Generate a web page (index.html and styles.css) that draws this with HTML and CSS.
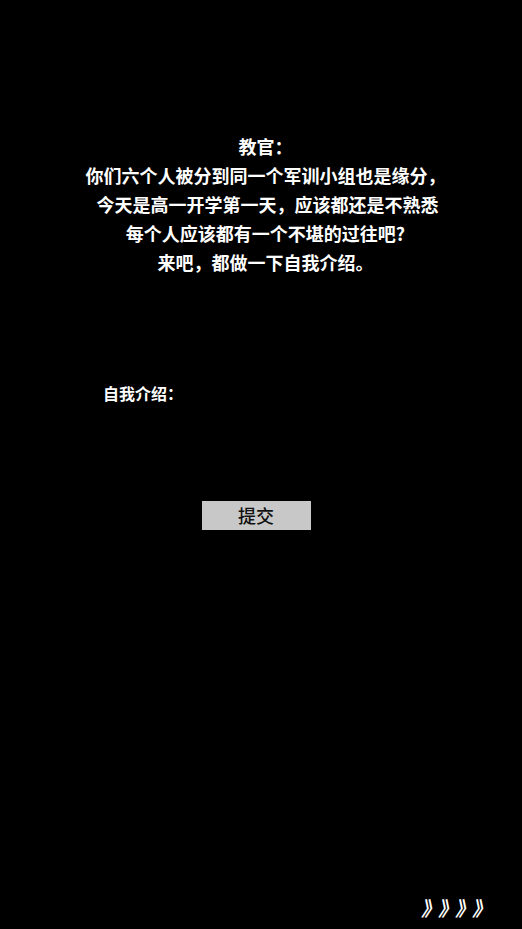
FILE: index.html
```html
<!DOCTYPE html>
<html lang="zh-CN">
<head>
  <meta charset="UTF-8">
  <meta name="viewport" content="width=device-width, initial-scale=1.0">
  <title>自我介绍</title>
  <link rel="stylesheet" href="styles.css">
</head>
<body>
  <div class="stage">
    <div class="dialog">
      <div class="line">教官：</div>
      <div class="line">你们六个人被分到同一个军训小组也是缘分，</div>
      <div class="line">&nbsp;今天是高一开学第一天，应该都还是不熟悉</div>
      <div class="line">每个人应该都有一个不堪的过往吧?</div>
      <div class="line">来吧，都做一下自我介绍。</div>
    </div>

    <div class="intro">
      <label class="intro-label" for="intro-text">自我介绍：</label>
      <input class="intro-input" id="intro-text" type="text">
    </div>

    <div class="actions">
      <button class="submit" type="button">提交</button>
    </div>
  </div>

  <div class="next">》》》》</div>
</body>
</html>
```

FILE: styles.css
```css
* {
  margin: 0;
  padding: 0;
  box-sizing: border-box;
}

html, body {
  height: 100%;
  overflow: hidden;
  background: #000000;
  color: #ffffff;
  font-family: "Noto Sans CJK SC", "Noto Sans", sans-serif;
}

body {
  display: flex;
  flex-direction: column;
  justify-content: space-between;
}

.stage {
  padding-top: 132px;
}

.dialog {
  padding-left: 9px;
  text-align: center;
  font-size: 18px;
  font-weight: bold;
  line-height: 29px;
}

.line {
  white-space: pre;
}

.intro {
  display: flex;
  align-items: center;
  margin-top: 104px;
  padding-left: 103px;
}

.intro-label {
  font-size: 16px;
  font-weight: bold;
  line-height: 24px;
}

.intro-input {
  width: 200px;
  height: 24px;
  background: transparent;
  border: none;
  outline: none;
  color: #ffffff;
  font-family: inherit;
  font-size: 16px;
}

.actions {
  display: flex;
  justify-content: center;
  margin-top: 96px;
  padding-right: 10px;
}

.submit {
  width: 109px;
  height: 29px;
  background: #c8c8c8;
  border: none;
  color: #111111;
  font-family: inherit;
  font-size: 18px;
  font-weight: 500;
  line-height: 29px;
  cursor: pointer;
}

/* next-page arrows, bottom right */
.next {
  align-self: flex-end;
  padding: 0 22px 6px 0;
  font-size: 20px;
  font-weight: bold;
  letter-spacing: 7px;
  line-height: 30px;
  transform: skewX(-12deg);
}
```
